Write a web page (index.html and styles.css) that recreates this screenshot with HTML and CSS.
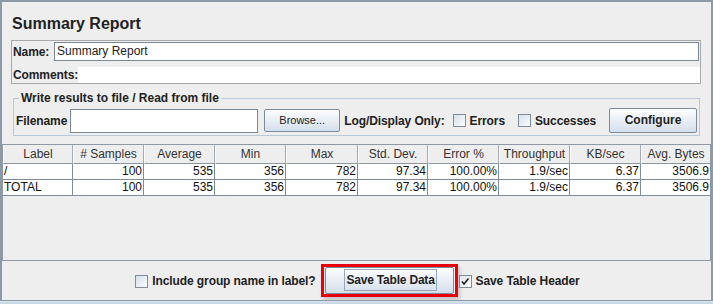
FILE: index.html
```html
<!DOCTYPE html>
<html>
<head>
	<meta charset="UTF-8">
	<title>Summary Report</title>
	<link rel="stylesheet" href="styles.css">
</head>
<body>
	<div class="frame">
		<div class="top">
			<h1 class="title">Summary Report</h1>
			<div class="namebox">
				<div class="row">
					<span class="lbl">Name:</span>
					<div class="field name">Summary Report</div>
				</div>
				<div class="row comments">
					<span class="lbl">Comments:</span>
					<div class="area"></div>
				</div>
			</div>
			<fieldset class="group">
				<legend>Write results to file / Read from file</legend>
				<div class="filerow">
					<span class="lbl">Filename</span>
					<div class="field file"></div>
					<div class="btn browse">Browse...</div>
					<span class="lbl log">Log/Display Only:</span>
					<span class="check"></span>
					<span class="lbl ctext">Errors</span>
					<span class="check succ"></span>
					<span class="lbl ctext">Successes</span>
					<div class="btn configure">Configure</div>
				</div>
			</fieldset>
		</div>

		<div class="pane">
			<div class="grid">
				<div class="th">Label</div>
				<div class="th"># Samples</div>
				<div class="th">Average</div>
				<div class="th">Min</div>
				<div class="th">Max</div>
				<div class="th">Std. Dev.</div>
				<div class="th">Error %</div>
				<div class="th">Throughput</div>
				<div class="th">KB/sec</div>
				<div class="th last">Avg. Bytes</div>

				<div class="td left">/</div>
				<div class="td">100</div>
				<div class="td">535</div>
				<div class="td">356</div>
				<div class="td">782</div>
				<div class="td">97.34</div>
				<div class="td">100.00%</div>
				<div class="td">1.9/sec</div>
				<div class="td">6.37</div>
				<div class="td last">3506.9</div>

				<div class="td left">TOTAL</div>
				<div class="td">100</div>
				<div class="td">535</div>
				<div class="td">356</div>
				<div class="td">782</div>
				<div class="td">97.34</div>
				<div class="td">100.00%</div>
				<div class="td">1.9/sec</div>
				<div class="td">6.37</div>
				<div class="td last">3506.9</div>
			</div>
		</div>

		<div class="bottom">
			<span class="check"></span>
			<span class="lbl ctext">Include group name in label?</span>
			<div class="mark">
				<div class="btn save"><span class="focus">Save Table Data</span></div>
			</div>
			<span class="check on">
				<svg width="11" height="11" viewBox="0 0 11 11"><path d="M2 5.5 L4 8 L8.5 2.5" fill="none" stroke="#222" stroke-width="1.6"/></svg>
			</span>
			<span class="lbl ctext">Save Table Header</span>
		</div>
		<div class="strip"></div>
	</div>
</body>
</html>
```

FILE: styles.css
```css
body,h1,fieldset,legend{
	margin: 0;
	padding: 0;
}
body{
	background: #eeeeee;
	font-family: "Liberation Sans", Arial, sans-serif;
	font-size: 12px;
	color: #222;
}
.frame{
	width: 713px;
	height: 304px;
	box-sizing: border-box;
	border: 2px solid #8c99a6;
	border-bottom: none;
	display: flex;
	flex-direction: column;
}
.top{
	height: 142px;
	flex: none;
	padding: 12px 0 0 9px;
	box-sizing: border-box;
}
.title{
	font-size: 16px;
	line-height: 20px;
	font-weight: bold;
	color: #222;
	padding-left: 1px;
}
.lbl{
	font-weight: bold;
	white-space: nowrap;
	letter-spacing: -0.1px;
}
.namebox{
	margin-top: 6px;
	width: 690px;
	height: 44px;
	box-sizing: border-box;
	border: 1px solid #a9a9a9;
	padding: 1px 0 0 1px;
}
.namebox .row{
	display: flex;
	align-items: center;
}
.namebox .row .lbl{
	width: 41px;
}
.field{
	background: #fff;
	border: 1px solid #7b8a99;
	box-sizing: border-box;
}
.field.name{
	width: 645px;
	height: 19px;
	line-height: 17px;
	padding-left: 2px;
}
.comments{
	margin-top: 6px;
}
.comments .lbl{
	width: 65px !important;
}
.comments .area{
	flex: 1;
	height: 16px;
	background: #fff;
}
.group{
	margin: 7px 0 0 2px;
	width: 687px;
	box-sizing: border-box;
	border: 1px solid #b8c9da;
	padding: 3px 2px 2px 2px;
}
.group legend{
	font-weight: bold;
	line-height: 14px;
	padding: 0 2px;
	margin-left: 3px;
}
.filerow{
	display: flex;
	align-items: center;
	height: 25px;
}
.field.file{
	width: 188px;
	height: 24px;
	margin-left: 3px;
}
.btn{
	box-sizing: border-box;
	border: 1px solid #7c8c9c;
	border-radius: 2px;
	background: linear-gradient(#fdfdfe, #d4dfeb);
	text-align: center;
	color: #222;
	white-space: nowrap;
}
.browse{
	width: 76px;
	height: 23px;
	line-height: 21px;
	font-size: 11px;
	margin-left: 6px;
}
.log{
	margin-left: 4px;
}
.check{
	display: inline-block;
	width: 13px;
	height: 13px;
	box-sizing: border-box;
	border: 1px solid #7d8d9d;
	background: linear-gradient(135deg, #d7e0ea, #fbfcfd);
	flex: none;
	position: relative;
}
.filerow .check{
	margin-left: 8px;
}
.ctext{
	margin-left: 4px;
}
.filerow .succ{
	margin-left: 13px;
}
.configure{
	margin-left: auto;
	width: 88px;
	height: 25px;
	line-height: 23px;
	font-weight: bold;
}
.pane{
	height: 117px;
	flex: none;
	box-sizing: border-box;
	border: 1px solid #8e9aa6;
}
.grid{
	display: grid;
	grid-template-columns: 70px 71px 71px 71px 72px 70px 71px 71px 71px 69px;
}
.th{
	height: 19px;
	line-height: 18px;
	box-sizing: border-box;
	text-align: center;
	color: #333;
	background: #eeeeee;
	border-left: 1px solid #fafafa;
	border-right: 1px solid #a3abb4;
	border-bottom: 1px solid #8c98a4;
}
.td{
	height: 16px;
	line-height: 15px;
	box-sizing: border-box;
	background: #fff;
	text-align: right;
	padding-right: 1px;
	border-right: 1px solid #7f8d9b;
	border-bottom: 1px solid #7f8d9b;
	color: #111;
}
.td.left{
	text-align: left;
	padding-left: 1px;
}
.th.last,.td.last{
	border-right: none;
}
.bottom{
	height: 39px;
	flex: none;
	display: flex;
	align-items: center;
	justify-content: center;
	padding-left: 2px;
}
.bottom .check{
	margin-top: 1px;
}
.mark{
	margin-left: 5px;
	width: 137px;
	height: 33px;
	box-sizing: border-box;
	border: 3px solid #e8000b;
	padding: 0 1px;
	margin-top: -1px;
	box-shadow: 2px 3px 4px rgba(0,0,0,0.18);
	display: flex;
	align-items: center;
	flex: none;
}
.save{
	width: 129px;
	height: 27px;
	display: flex;
	align-items: center;
	justify-content: center;
	font-weight: bold;
	letter-spacing: -0.2px;
}
.focus{
	display: block;
	height: 22px;
	line-height: 20px;
	box-sizing: border-box;
	border: 1px solid #9aa9b8;
	padding: 0 1px;
	margin-left: 3px;
	white-space: nowrap;
}
.check.on{
	margin-left: 1px;
	background: linear-gradient(135deg, #dfe6ee, #fbfcfd);
}
.check.on svg{
	position: absolute;
	left: 0;
	top: 0;
}
.strip{
	flex: 1;
	border-top: 1px solid #8c99a6;
	background: linear-gradient(#d9e4ef, #c3d3e3);
	margin: 0 -2px;
}
```
